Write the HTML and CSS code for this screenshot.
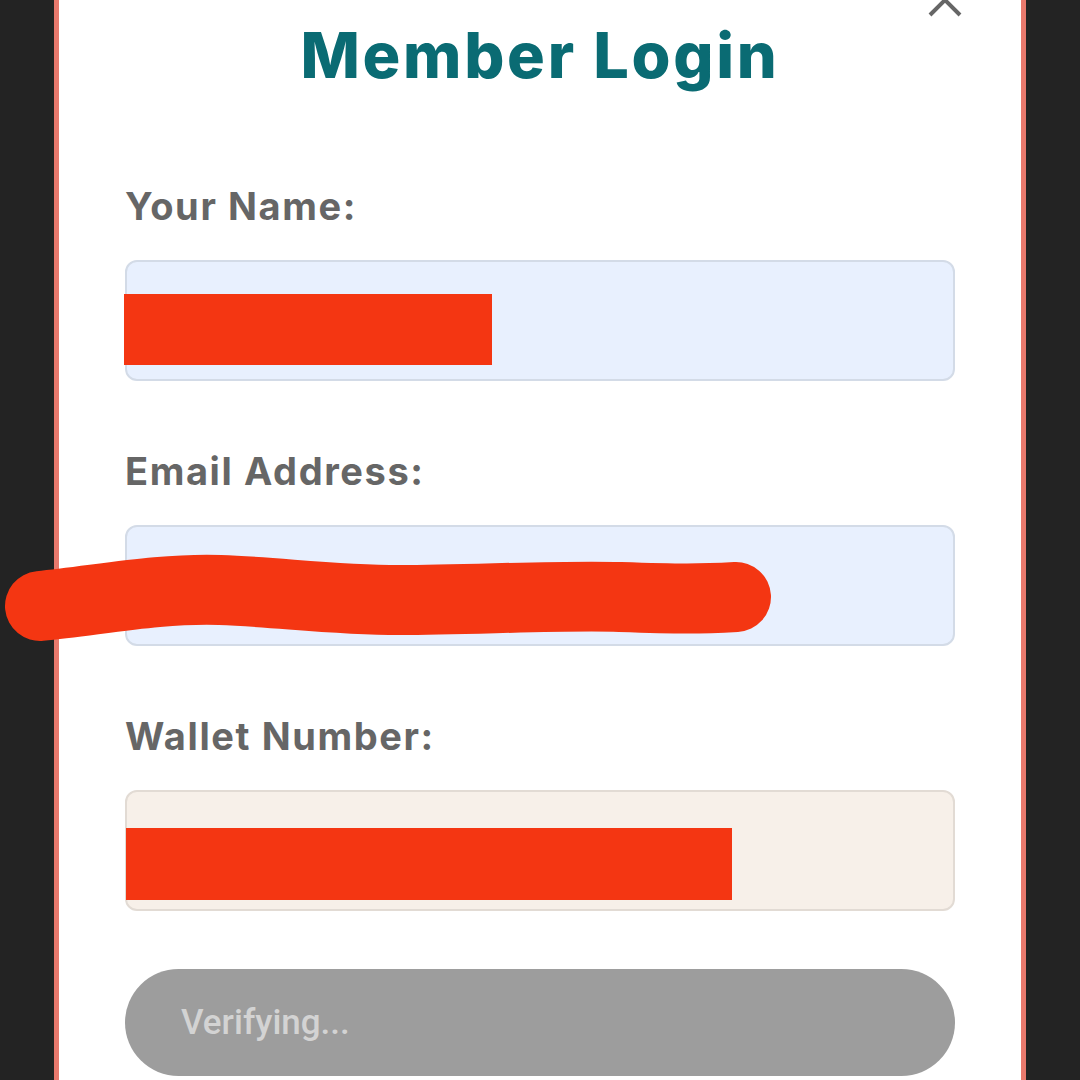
FILE: index.html
```html
<!DOCTYPE html>
<html lang="en">
<head>
<meta charset="utf-8">
<title>Member Login</title>
<link rel="stylesheet" href="styles.css">
</head>
<body>
<div class="page">
  <div class="modal">
    <button class="close" aria-label="Close">
      <svg width="34" height="34" viewBox="0 0 34 34"><path d="M2 2 L32 32 M32 2 L2 32" stroke="#666" stroke-width="4" fill="none"/></svg>
    </button>
    <h1 class="title">Member Login</h1>
    <form class="form">
      <div class="field">
        <label class="label">Your Name:</label>
        <div class="input input-blue"></div>
      </div>
      <div class="field">
        <label class="label">Email Address:</label>
        <div class="input input-blue"></div>
      </div>
      <div class="field">
        <label class="label">Wallet Number:</label>
        <div class="input input-beige"></div>
      </div>
      <button type="button" class="submit">Verifying...</button>
    </form>
  </div>
  <div class="redact redact-name"></div>
  <div class="redact redact-wallet"></div>
  <svg class="redact-email" width="1080" height="1080" viewBox="0 0 1080 1080">
    <path d="M40,606 C100,600 160,588 220,590 S330,600 400,600 S560,595 620,597 S700,599 736,597" stroke="#f43612" stroke-width="70" stroke-linecap="round" fill="none"/>
  </svg>
</div>
</body>
</html>
```
FILE: styles.css
```css
html, body {
  margin: 0;
  padding: 0;
  background: #232323;
  height: 1080px;
  overflow: hidden;
}
.page {
  position: relative;
  width: 1080px;
  height: 1080px;
}
.modal {
  position: relative;
  margin-left: 54px;
  width: 972px;
  height: 1100px;
  background: #ffffff;
  border-left: 5px solid #e8796d;
  border-right: 5px solid #e8796d;
  padding: 15px 66px 0 66px;
  box-sizing: border-box;
}
.close {
  position: absolute;
  top: -17px;
  right: 59px;
  width: 34px;
  height: 34px;
  padding: 0;
  border: none;
  background: none;
}
.title {
  margin: 0;
  text-align: center;
  font-family: Inter, "Noto Sans", sans-serif;
  font-weight: 800;
  font-size: 63px;
  line-height: 80px;
  color: #0a6b73;
  letter-spacing: 2.7px;
}
.form {
  display: flex;
  flex-direction: column;
  margin-top: 89px;
}
.field {
  display: flex;
  flex-direction: column;
  margin-bottom: 68px;
}
.field:last-of-type {
  margin-bottom: 58px;
}
.label {
  font-family: Inter, "Noto Sans", sans-serif;
  font-weight: 700;
  font-size: 38px;
  line-height: 44px;
  color: #666666;
  letter-spacing: 1.6px;
  margin-bottom: 32px;
}
.input {
  height: 121px;
  box-sizing: border-box;
  border-radius: 12px;
  border: 2px solid #d3dbe7;
}
.input-blue {
  background: #e8f0fe;
}
.input-beige {
  background: #f7f0e9;
  border-color: #e2dbd4;
}
.submit {
  height: 107px;
  border: none;
  border-radius: 54px;
  background: #9d9d9d;
  color: #d3d3d3;
  font-family: Roboto, "Liberation Sans", sans-serif;
  font-weight: 500;
  font-size: 35px;
  text-align: left;
  padding: 0 0 0 56px;
}
.redact {
  position: absolute;
  background: #f43612;
}
.redact-name {
  left: 124px;
  top: 294px;
  width: 368px;
  height: 71px;
}
.redact-wallet {
  left: 126px;
  top: 828px;
  width: 606px;
  height: 72px;
}
.redact-email {
  position: absolute;
  left: 0;
  top: 0;
}
```
